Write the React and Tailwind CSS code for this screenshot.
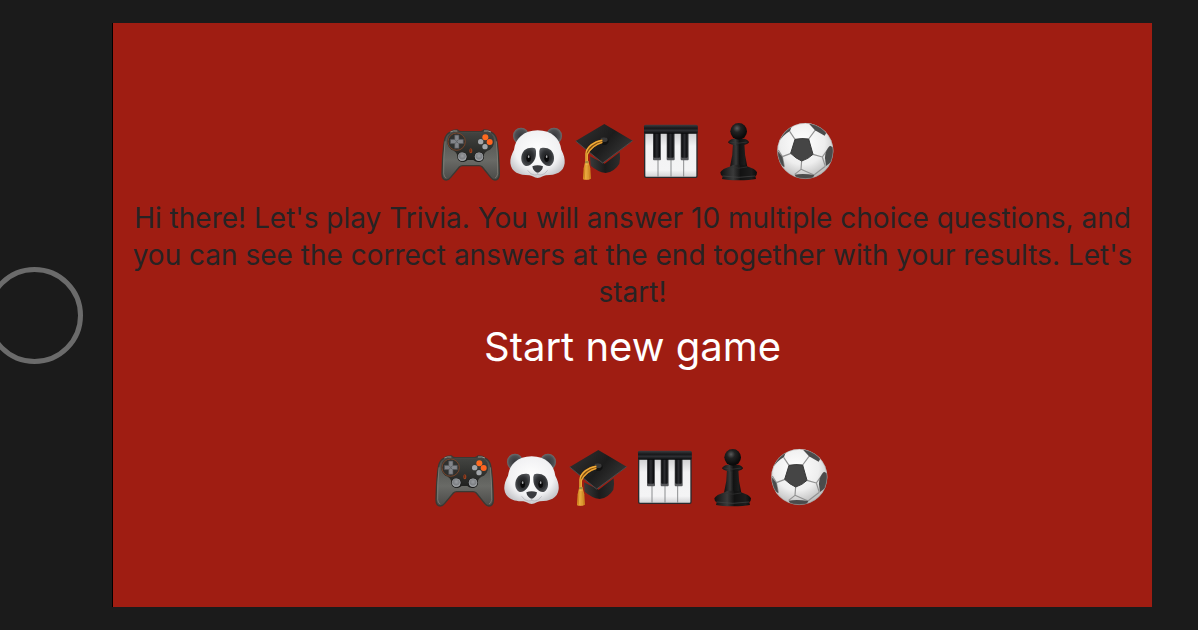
import React from "react";

function Gradients() {
  return (
    <svg className="absolute h-0 w-0" aria-hidden="true">
      <defs>
        <linearGradient id="pad" x1="0" y1="0" x2="0" y2="1">
          <stop offset="0" stopColor="#4a4b48" />
          <stop offset="0.6" stopColor="#696a66" />
          <stop offset="1" stopColor="#4b4b48" />
        </linearGradient>
        <linearGradient id="padTop" x1="0" y1="0" x2="0" y2="1">
          <stop offset="0" stopColor="#444542" />
          <stop offset="1" stopColor="#1f201e" />
        </linearGradient>
        <radialGradient id="stick" cx="0.5" cy="0.4" r="0.6">
          <stop offset="0" stopColor="#9a9da1" />
          <stop offset="0.65" stopColor="#7c7f83" />
          <stop offset="1" stopColor="#aeb1b4" />
        </radialGradient>
        <radialGradient id="face" cx="0.5" cy="0.42" r="0.62">
          <stop offset="0" stopColor="#ffffff" />
          <stop offset="0.65" stopColor="#f1f1f3" />
          <stop offset="1" stopColor="#bfc0c4" />
        </radialGradient>
        <radialGradient id="ear" cx="0.5" cy="0.5" r="0.55">
          <stop offset="0" stopColor="#34353a" />
          <stop offset="0.65" stopColor="#4c4e51" />
          <stop offset="1" stopColor="#77797b" />
        </radialGradient>
        <radialGradient id="eye" cx="0.5" cy="0.5" r="0.55">
          <stop offset="0" stopColor="#191a1c" />
          <stop offset="0.6" stopColor="#303235" />
          <stop offset="1" stopColor="#54565a" />
        </radialGradient>
        <linearGradient id="board" x1="0" y1="0.2" x2="1" y2="0.8">
          <stop offset="0" stopColor="#303030" />
          <stop offset="0.5" stopColor="#1c1c1c" />
          <stop offset="1" stopColor="#3c3c3c" />
        </linearGradient>
        <linearGradient id="cap" x1="0" y1="0" x2="1" y2="0">
          <stop offset="0" stopColor="#3a3a3a" />
          <stop offset="0.5" stopColor="#1b1b1b" />
          <stop offset="1" stopColor="#2d2d2d" />
        </linearGradient>
        <linearGradient id="tassel" x1="0" y1="0" x2="1" y2="0">
          <stop offset="0" stopColor="#d98a1c" />
          <stop offset="0.45" stopColor="#f3b84a" />
          <stop offset="1" stopColor="#c77a18" />
        </linearGradient>
        <linearGradient id="keys" x1="0" y1="0" x2="0" y2="1">
          <stop offset="0" stopColor="#cfcfd1" />
          <stop offset="0.3" stopColor="#f2f2f3" />
          <stop offset="0.85" stopColor="#f4f4f5" />
          <stop offset="1" stopColor="#d4d4d6" />
        </linearGradient>
        <linearGradient id="lid" x1="0" y1="0" x2="0" y2="1">
          <stop offset="0" stopColor="#3d3f43" />
          <stop offset="0.4" stopColor="#17181a" />
          <stop offset="0.65" stopColor="#2d2f33" />
          <stop offset="1" stopColor="#08090a" />
        </linearGradient>
        <linearGradient id="blackKey" x1="0" y1="0" x2="1" y2="0">
          <stop offset="0" stopColor="#08090b" />
          <stop offset="0.5" stopColor="#2b2c30" />
          <stop offset="1" stopColor="#08090b" />
        </linearGradient>
        <linearGradient id="pawn" x1="0" y1="0" x2="1" y2="0">
          <stop offset="0" stopColor="#101010" />
          <stop offset="0.35" stopColor="#3a3a3a" />
          <stop offset="0.55" stopColor="#121212" />
          <stop offset="0.85" stopColor="#1d1d1d" />
          <stop offset="1" stopColor="#0a0a0a" />
        </linearGradient>
        <radialGradient id="pawnHead" cx="0.4" cy="0.32" r="0.6">
          <stop offset="0" stopColor="#5a5a5a" />
          <stop offset="0.4" stopColor="#222222" />
          <stop offset="1" stopColor="#0b0b0b" />
        </radialGradient>
        <radialGradient id="ball" cx="0.45" cy="0.35" r="0.66">
          <stop offset="0" stopColor="#ffffff" />
          <stop offset="0.6" stopColor="#eeeeee" />
          <stop offset="1" stopColor="#b9b9b9" />
        </radialGradient>
        <clipPath id="ballEdge">
          <circle cx="316" cy="108" r="83.500" />
        </clipPath>
      </defs>
    </svg>
  );
}

const iconClass = "h-[60px] w-[60px] shrink-0";

function Controller() {
  return (
    <svg viewBox="33 21 180 180" className={iconClass} role="img" aria-label="Video game">
      <path
        d="M60 52Q68 45 82 45Q86 49 92 50H152Q158 49 162 45Q176 45 184 52Q196 56 200 74Q206 104 208 176Q208 194 195 195Q188 195 182 187L157 156Q153 152 147 152H98Q92 152 88 156L62 187Q56 195 49 195Q36 194 36 176Q38 104 44 74Q48 56 60 52Z"
        fill="url(#pad)" stroke="#3a3934" strokeWidth="4"
      />
      <path d="M45 79Q40 130 41 176Q43 188 49 189" fill="none" stroke="#85847c" strokeWidth="3" opacity="0.7" />
      <path d="M199 79Q204 130 203 176Q201 188 195 189" fill="none" stroke="#85847c" strokeWidth="3" opacity="0.7" />
      <path
        d="M82 49Q92 54 100 53H145Q154 54 163 49Q181 50 190 65Q198 90 180 104Q163 108 160 125Q157 139 146 140Q136 142 130 135H113Q106 142 97 140Q86 138 83 125Q80 108 64 104Q46 90 54 65Q62 51 82 49Z"
        fill="url(#padTop)"
      />
      <path d="M61 51Q70 46 82 48" fill="none" stroke="#92918a" strokeWidth="3" />
      <path d="M183 51Q174 46 162 48" fill="none" stroke="#92918a" strokeWidth="3" />
      <circle cx="80" cy="80" r="26" fill="#30312f" stroke="#84482a" strokeWidth="2.500" />
      <path d="M74 60H87V73H100V86H87V100H74V86H61V73H74Z" fill="#83858a" stroke="#4b4d50" strokeWidth="2" strokeLinejoin="round" />
      <path d="M75 74L80 79L86 74M75 86L80 80L86 86" stroke="#4f5154" strokeWidth="2" fill="none" />
      <circle cx="166" cy="67" r="9" fill="#ff6a1f" />
      <circle cx="179" cy="81" r="9" fill="#ff6420" />
      <circle cx="152" cy="80" r="8" fill="#a3a6aa" />
      <circle cx="165" cy="95" r="8" fill="#a3a6aa" />
      <ellipse cx="122.500" cy="107" rx="4.500" ry="7.500" fill="#9c4321" />
      <path d="M122 102V111" stroke="#55200f" strokeWidth="2" />
      <circle cx="97" cy="126" r="15" fill="#191a1a" />
      <circle cx="147" cy="126" r="15" fill="#191a1a" />
      <circle cx="97" cy="125" r="12" fill="url(#stick)" stroke="#a4a7aa" strokeWidth="2" />
      <circle cx="147" cy="125" r="12" fill="url(#stick)" stroke="#a4a7aa" strokeWidth="2" />
    </svg>
  );
}

function Panda() {
  return (
    <svg viewBox="234 21 180 180" className={iconClass} role="img" aria-label="Panda">
      <ellipse cx="273" cy="63" rx="24" ry="25" fill="url(#ear)" />
      <ellipse cx="372" cy="63" rx="24" ry="25" fill="url(#ear)" />
      <path
        d="M323 46C366 46 390 72 394 104C402 120 405 130 404 145C401 172 377 181 348 181C340 182 334 188 323 189C312 188 306 182 298 181C268 181 244 172 241 145C240 130 244 120 252 104C256 72 280 46 323 46Z"
        fill="url(#face)"
      />
      <path d="M316 101C312 97 293 96 283 106C270 120 271 145 285 152C300 157 318 138 318 117Q319 106 316 101Z" fill="url(#eye)" />
      <path d="M330 101C334 97 353 96 363 106C376 120 375 145 361 152C346 157 328 138 328 117Q327 106 330 101Z" fill="url(#eye)" />
      <ellipse cx="296" cy="130" rx="8.500" ry="12" fill="#09090a" stroke="#54565a" />
      <ellipse cx="350" cy="130" rx="8.500" ry="12" fill="#09090a" stroke="#54565a" />
      <ellipse cx="296" cy="125" rx="2.500" ry="4" fill="#a7a8aa" />
      <ellipse cx="350" cy="125" rx="2.500" ry="4" fill="#a7a8aa" />
      <path d="M307 154Q323 148 339 154Q339 161 332 168Q323 178 314 168Q307 161 307 154Z" fill="#3a3b3f" />
      <path d="M323 173V179M293 166Q302 180 314 180Q321 180 323 177Q325 180 332 180Q344 180 353 166" fill="none" stroke="#b5b5ba" strokeWidth="2.500" />
    </svg>
  );
}

function GraduationCap() {
  return (
    <svg viewBox="30 21 180 180" className={iconClass} role="img" aria-label="Graduation cap">
      <path d="M75 124L119 146L164 112Q167 130 163 146Q150 169 122 174Q97 170 77 152Z" fill="url(#cap)" />
      <path d="M32 78L118 27L203 77L113 145Z" fill="url(#board)" />
      <path d="M32 78L113 144L203 77" fill="none" stroke="#4c4c4c" strokeWidth="3" strokeLinejoin="round" />
      <ellipse cx="118" cy="78" rx="13" ry="12" fill="#111111" />
      <ellipse cx="117" cy="74" rx="11" ry="7" fill="#393939" />
      <path d="M112 76C88 80 66 95 65 116V143M112 81C90 88 73 101 66 119" fill="none" stroke="#8d560f" strokeWidth="7" />
      <path d="M112 76C88 79 64 96 63 116V142" fill="none" stroke="#f2ae3b" strokeWidth="4" />
      <path d="M112 82C93 87 76 101 67 118V142" fill="none" stroke="#eba638" strokeWidth="4" />
      <path d="M61 137H70L76 160L78 191Q66 197 54 193L56 160Z" fill="url(#tassel)" />
      <path d="M60 151L58 191M66 150V193M71 151L73 191" stroke="#b87319" strokeWidth="1.500" />
      <rect x="60" y="138" width="11" height="7" rx="2" fill="#a58b3d" />
    </svg>
  );
}

function Piano() {
  return (
    <svg viewBox="231 21 180 180" className={iconClass} role="img" aria-label="Piano keys">
      <rect x="237" y="30" width="161" height="159" rx="6" fill="#292a2d" />
      <rect x="241" y="54" width="153" height="131" rx="2" fill="url(#keys)" />
      <path d="M279 55V185M318 55V185M356 55V185" stroke="#77787b" strokeWidth="2.500" />
      <rect x="264" y="52" width="24" height="84" rx="3" fill="#57585b" />
      <rect x="305" y="52" width="24" height="84" rx="3" fill="#57585b" />
      <rect x="347" y="52" width="24" height="84" rx="3" fill="#57585b" />
      <rect x="266" y="52" width="19" height="76" rx="3" fill="url(#blackKey)" />
      <rect x="307" y="52" width="19" height="76" rx="3" fill="url(#blackKey)" />
      <rect x="349" y="52" width="19" height="76" rx="3" fill="url(#blackKey)" />
      <rect x="237" y="29" width="161" height="27" rx="5" fill="url(#lid)" />
    </svg>
  );
}

function Pawn() {
  return (
    <svg viewBox="27 21 180 180" className={iconClass} role="img" aria-label="Chess pawn">
      <path d="M99 85H133Q133 122 142 155H90Q99 122 99 85Z" fill="url(#pawn)" />
      <path d="M92 154Q97 149 105 149H128Q135 149 141 154Q167 162 171 172Q171 181 166 184L168 192Q150 196 116 196Q82 196 66 192L68 184Q61 181 61 172Q66 162 92 154Z" fill="url(#pawn)" />
      <path d="M68 183Q116 191 165 183" fill="none" stroke="#464646" strokeWidth="2" />
      <path d="M93 156Q116 163 141 156" fill="none" stroke="#333333" strokeWidth="2" />
      <path d="M100 71H132Q145 74 147 82Q143 91 116 92Q89 91 84 82Q87 74 100 71Z" fill="url(#pawn)" />
      <path d="M88 81Q116 88 143 81" fill="none" stroke="#3a3a3a" strokeWidth="2" />
      <circle cx="116" cy="49" r="25" fill="url(#pawnHead)" />
    </svg>
  );
}

function SoccerBall() {
  return (
    <svg viewBox="228 21 180 180" className={iconClass} role="img" aria-label="Soccer ball">
      <circle cx="316" cy="108" r="84" fill="url(#ball)" />
      <g clipPath="url(#ballEdge)">
        <path
          d="M285 73L269 49M326 72L345 46M339 118L367 126M305 137L303 163M273 115L247 125M367 126L376 154M367 126L389 95M303 163L284 178M303 163L342 180M376 154L342 180M247 125L235 105M247 125L253 155"
          fill="none" stroke="#929292" strokeWidth="3.500" strokeLinejoin="round"
        />
        <path d="M285 73Q306 69 326 72L339 118Q325 132 305 138Q287 130 272 115Z" fill="#454545" stroke="#383838" strokeWidth="3" strokeLinejoin="round" />
        <path d="M327 26L345 46L374 62L379 53L351 22Z" fill="#4b4b4b" />
        <path d="M270 48Q258 55 251 62L236 79L254 43L275 35Z" fill="#4b4b4b" />
        <path d="M390 92Q374 108 375 130L378 153L397 139L405 100Z" fill="#4b4b4b" />
        <path d="M229 102L247 126L253 157L238 146Z" fill="#4b4b4b" />
        <path d="M284 179Q308 174 343 180L336 194H292Z" fill="#4b4b4b" />
      </g>
      <circle cx="316" cy="108" r="83" fill="none" stroke="#999999" strokeWidth="2" opacity="0.6" />
    </svg>
  );
}

function EmojiRow({ className = "" }) {
  return (
    <div className={`flex justify-center gap-[7px] ${className}`}>
      <Controller />
      <Panda />
      <GraduationCap />
      <Piano />
      <Pawn />
      <SoccerBall />
    </div>
  );
}

export default function App() {
  return (
    <div className="flex min-h-screen bg-[#1b1b1b] py-[23px] pr-[46px] font-['Inter',sans-serif]">
      <Gradients />
      <div className="flex w-[113px] shrink-0 items-center overflow-hidden border-r border-black">
        <button
          type="button"
          aria-label="Home"
          className="-ml-[14px] h-[97px] w-[97px] shrink-0 rounded-full border-5 border-[#6b6b6b]"
        />
      </div>
      <main className="flex min-w-0 flex-1 flex-col justify-center bg-[#9f1d12] px-3">
        <EmojiRow className="pl-3" />
        <p className="mt-[18px] text-center text-[28px] leading-[37px] text-[#272324]">
          Hi there! Let's play Trivia. You will answer 10 multiple choice questions, and you can see
          the correct answers at the end together with your results. Let's start!
        </p>
        <button type="button" className="mt-[11px] self-center text-[40px] leading-[50px] text-white">
          Start new game
        </button>
        <EmojiRow className="mt-[76px]" />
      </main>
    </div>
  );
}
